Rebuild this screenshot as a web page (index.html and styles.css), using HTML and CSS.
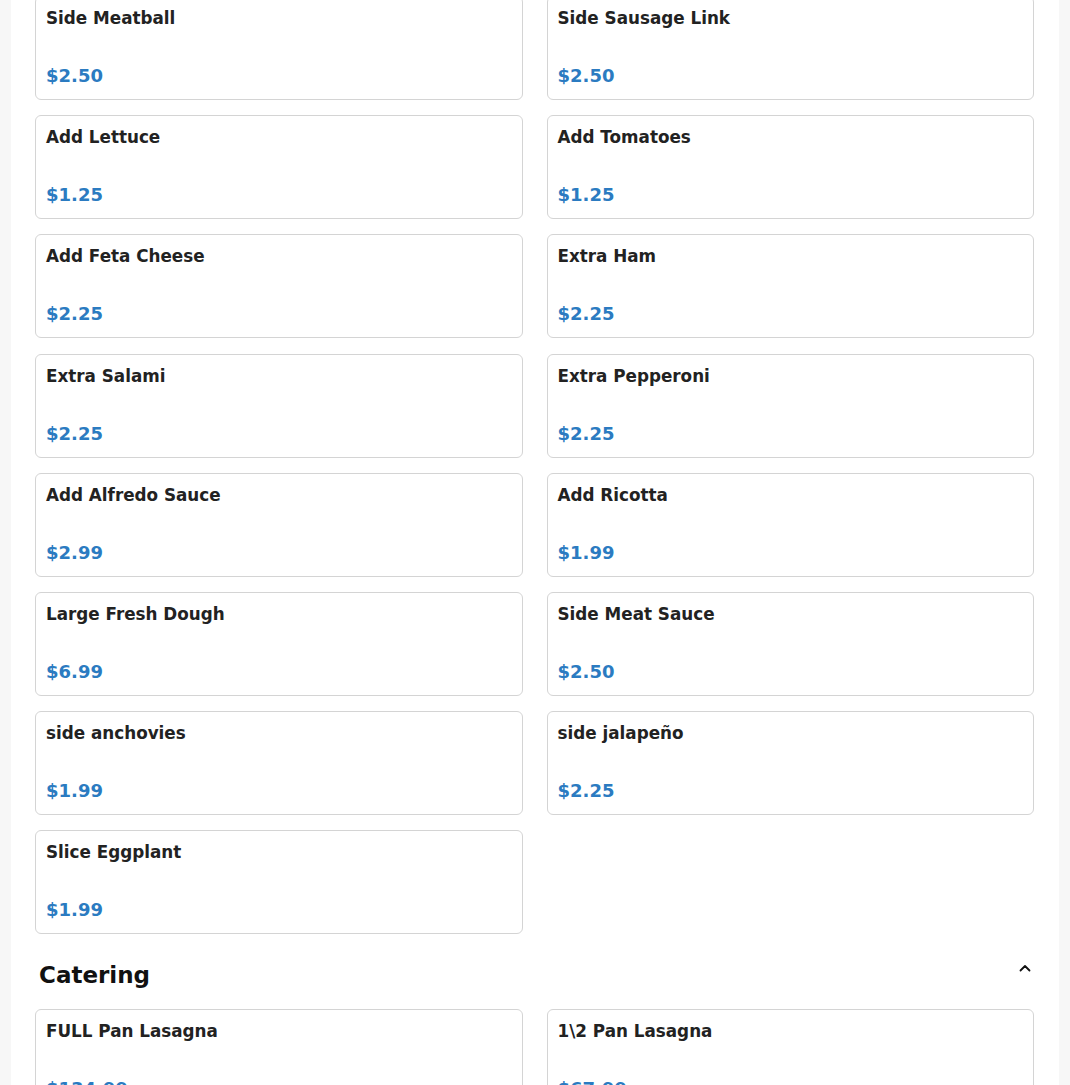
FILE: index.html
```html
<!DOCTYPE html>
<html lang="en">
<head>
<meta charset="utf-8">
<title>Menu</title>
<link rel="stylesheet" href="styles.css">
</head>
<body>
<main class="menu">
  <section class="section">
    <div class="grid">
      <div class="card"><div class="name">Side Meatball</div><div class="price">$2.50</div></div>
      <div class="card"><div class="name">Side Sausage Link</div><div class="price">$2.50</div></div>
      <div class="card"><div class="name">Add Lettuce</div><div class="price">$1.25</div></div>
      <div class="card"><div class="name">Add Tomatoes</div><div class="price">$1.25</div></div>
      <div class="card"><div class="name">Add Feta Cheese</div><div class="price">$2.25</div></div>
      <div class="card"><div class="name">Extra Ham</div><div class="price">$2.25</div></div>
      <div class="card"><div class="name">Extra Salami</div><div class="price">$2.25</div></div>
      <div class="card"><div class="name">Extra Pepperoni</div><div class="price">$2.25</div></div>
      <div class="card"><div class="name">Add Alfredo Sauce</div><div class="price">$2.99</div></div>
      <div class="card"><div class="name">Add Ricotta</div><div class="price">$1.99</div></div>
      <div class="card"><div class="name">Large Fresh Dough</div><div class="price">$6.99</div></div>
      <div class="card"><div class="name">Side Meat Sauce</div><div class="price">$2.50</div></div>
      <div class="card"><div class="name">side anchovies</div><div class="price">$1.99</div></div>
      <div class="card"><div class="name">side jalapeño</div><div class="price">$2.25</div></div>
      <div class="card"><div class="name">Slice Eggplant</div><div class="price">$1.99</div></div>
    </div>
  </section>
  <section class="section">
    <div class="section-head">
      <h2 class="section-title">Catering</h2>
      <svg class="chevron" width="16" height="16" viewBox="0 0 16 16" aria-hidden="true"><path d="M3.5 10.5 L8 6 L12.5 10.5" fill="none" stroke="#111" stroke-width="1.8" stroke-linecap="round" stroke-linejoin="round"/></svg>
    </div>
    <div class="grid">
      <div class="card"><div class="name">FULL Pan Lasagna</div><div class="price">$134.99</div></div>
      <div class="card"><div class="name">1\2 Pan Lasagna</div><div class="price">$67.99</div></div>
    </div>
  </section>
</main>
</body>
</html>
```

FILE: styles.css
```css
html, body {
  margin: 0;
  padding: 0;
  background: #f7f7f7;
  font-family: "DejaVu Sans", Verdana, sans-serif;
  color: #222;
}

.menu {
  margin: -5px 11px 0 11px;
  padding: 0 25px 40px 24px;
  background: #fff;
  min-height: 1200px;
}

.section:first-child .grid .card:nth-child(-n+2) {
  margin-top: 0;
}

.grid {
  display: grid;
  grid-template-columns: 1fr 1fr;
  column-gap: 24px;
  row-gap: 15.2px;
}

.section:first-child .grid {
  padding-top: 1px;
}

.card {
  border: 1px solid #d4d4d4;
  border-radius: 6px;
  padding: 11px 10px 12px 10px;
  background: #fff;
}

.name {
  font-size: 16.8px;
  line-height: 20px;
  font-weight: 700;
  color: #222;
}

.price {
  margin-top: 37px;
  font-size: 18px;
  line-height: 22px;
  font-weight: 700;
  color: #2b7bc1;
}

.section-head {
  display: flex;
  justify-content: space-between;
  align-items: flex-start;
  padding: 0 1px 0 4px;
  margin: 27px 0 20px 0;
}

.section-title {
  margin: 0;
  font-size: 23px;
  line-height: 28px;
  font-weight: 700;
  color: #111;
}

.chevron {
  display: block;
  margin-top: -1px;
}
```
